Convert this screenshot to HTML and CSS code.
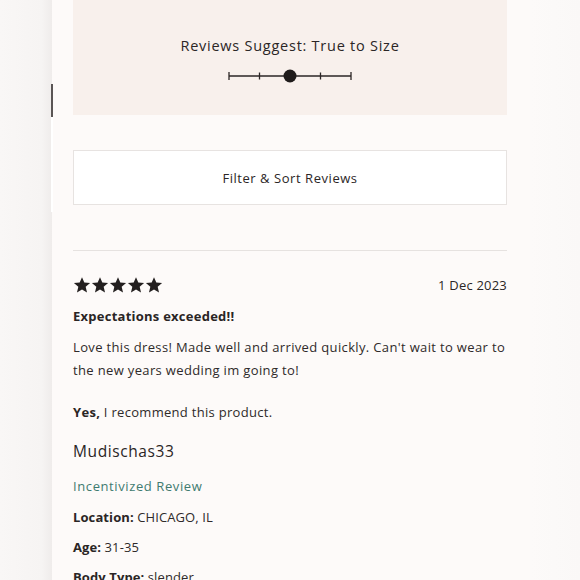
FILE: index.html
```html
<!DOCTYPE html>
<html>
<head>
<meta charset="utf-8">
<link rel="stylesheet" href="styles.css">
</head>
<body>
<div class="page">
  <div class="gutter left"><span class="thumb"></span><span class="track"></span></div>
  <main class="panel">
    <section class="fit">
      <p class="fit-label">Reviews Suggest: True to Size</p>
      <svg class="scale" width="124" height="16" viewBox="0 0 124 16">
        <line x1="1" y1="8" x2="123" y2="8" stroke="#2b2626" stroke-width="1.3"/>
        <line x1="1" y1="4" x2="1" y2="12" stroke="#2b2626" stroke-width="1.3"/>
        <line x1="31.5" y1="4.5" x2="31.5" y2="11.5" stroke="#2b2626" stroke-width="1.3"/>
        <line x1="92.5" y1="4.5" x2="92.5" y2="11.5" stroke="#2b2626" stroke-width="1.3"/>
        <line x1="123" y1="4" x2="123" y2="12" stroke="#2b2626" stroke-width="1.3"/>
        <circle cx="62" cy="8" r="6.5" fill="#1f1b1b"/>
      </svg>
    </section>
    <button class="filter">Filter &amp; Sort Reviews</button>
    <hr class="divider">
    <article class="review">
      <div class="review-head">
        <div class="stars">
          <svg viewBox="0 0 24 24"><path d="M12 1.5l3.1 7.2 7.7.6-5.9 5.1 1.8 7.6L12 18l-6.7 4 1.8-7.6-5.9-5.1 7.7-.6z"/></svg>
          <svg viewBox="0 0 24 24"><path d="M12 1.5l3.1 7.2 7.7.6-5.9 5.1 1.8 7.6L12 18l-6.7 4 1.8-7.6-5.9-5.1 7.7-.6z"/></svg>
          <svg viewBox="0 0 24 24"><path d="M12 1.5l3.1 7.2 7.7.6-5.9 5.1 1.8 7.6L12 18l-6.7 4 1.8-7.6-5.9-5.1 7.7-.6z"/></svg>
          <svg viewBox="0 0 24 24"><path d="M12 1.5l3.1 7.2 7.7.6-5.9 5.1 1.8 7.6L12 18l-6.7 4 1.8-7.6-5.9-5.1 7.7-.6z"/></svg>
          <svg viewBox="0 0 24 24"><path d="M12 1.5l3.1 7.2 7.7.6-5.9 5.1 1.8 7.6L12 18l-6.7 4 1.8-7.6-5.9-5.1 7.7-.6z"/></svg>
        </div>
        <span class="date">1 Dec 2023</span>
      </div>
      <h3 class="title">Expectations exceeded!!</h3>
      <p class="body-text">Love this dress! Made well and arrived quickly. Can't wait to wear to the new years wedding im going to!</p>
      <p class="recommend"><b>Yes,</b> I recommend this product.</p>
      <p class="author">Mudischas33</p>
      <p class="incent">Incentivized Review</p>
      <p class="meta"><b>Location:</b> CHICAGO, IL</p>
      <p class="meta"><b>Age:</b> 31-35</p>
      <p class="meta"><b>Body Type:</b> slender</p>
    </article>
  </main>
  <div class="gutter right"></div>
</div>
</body>
</html>
```

FILE: styles.css
```css
* { box-sizing: border-box; }
html, body { margin: 0; padding: 0; }
body {
  background: #f8f6f5;
  font-family: "Open Sans", "Liberation Sans", sans-serif;
  color: #2a2525;
  width: 580px;
  height: 580px;
  overflow: hidden;
}
.page {
  display: flex;
  height: 580px;
}
.gutter {
  flex: none;
  position: relative;
}
.gutter.left {
  width: 52px;
  background: linear-gradient(90deg, #f9f7f6 0%, #f6f4f3 80%, #efeceb 100%);
}
.thumb {
  position: absolute;
  left: 51px;
  top: 84px;
  width: 2px;
  height: 33px;
  background: #5a5555;
}
.track {
  position: absolute;
  left: 51px;
  top: 117px;
  width: 2px;
  height: 95px;
  background: #ffffff;
}
.gutter.right {
  width: 50px;
  background: linear-gradient(90deg, #fcfaf9 0%, #faf8f7 100%);
}
.panel {
  width: 478px;
  flex: none;
  background: #fdfaf9;
  padding: 0 23px 0 21px;
  display: flex;
  flex-direction: column;
  overflow: hidden;
}
.panel > *, .review > * { flex-shrink: 0; }
.fit {
  height: 115px;
  background: #f8f0ec;
  display: flex;
  flex-direction: column;
  align-items: center;
  padding-top: 36px;
}
.fit-label {
  margin: 0;
  font-size: 14.5px;
  line-height: 20px;
  letter-spacing: 0.75px;
  color: #2b2626;
}
.scale {
  margin-top: 12px;
  display: block;
}
.filter {
  margin-top: 35px;
  height: 55px;
  background: #ffffff;
  border: 1px solid #e7e3e1;
  font-family: inherit;
  font-size: 13px;
  letter-spacing: 0.55px;
  color: #2b2626;
  padding: 0;
}
.divider {
  margin: 45px 0 0;
  border: 0;
  border-top: 1px solid #e6e2e0;
  height: 0;
}
.review {
  display: flex;
  flex-direction: column;
}
.review-head {
  margin-top: 25px;
  display: flex;
  justify-content: space-between;
  align-items: center;
  height: 18px;
}
.stars {
  display: flex;
  gap: 0;
  margin-left: 0;
}
.stars svg {
  width: 18px;
  height: 18px;
  fill: #231f1f;
  display: block;
}
.date {
  font-size: 13px;
  letter-spacing: 0.2px;
  color: #2b2626;
}
.title {
  margin: 13px 0 0;
  font-size: 13px;
  font-weight: 700;
  line-height: 18px;
  letter-spacing: 0.25px;
  color: #2a2525;
}
.body-text {
  margin: 11px 0 0;
  font-size: 13px;
  line-height: 22.5px;
  letter-spacing: 0.35px;
  color: #2f2a2a;
}
.recommend {
  margin: 22px 0 0;
  font-size: 13px;
  line-height: 18px;
  letter-spacing: 0.3px;
  color: #2f2a2a;
}
.recommend b { font-weight: 700; color: #2a2525; }
.author {
  margin: 20px 0 0;
  font-size: 15.5px;
  line-height: 20px;
  letter-spacing: 0.6px;
  color: #2a2525;
}
.incent {
  margin: 16px 0 0;
  font-size: 13px;
  line-height: 18px;
  letter-spacing: 0.6px;
  color: #3f7b70;
}
.meta {
  margin: 13px 0 0;
  font-size: 13px;
  line-height: 18px;
  letter-spacing: 0.1px;
  color: #2f2a2a;
}
.meta + .meta { margin-top: 12px; }
.meta b { font-weight: 700; color: #2a2525; }
```
